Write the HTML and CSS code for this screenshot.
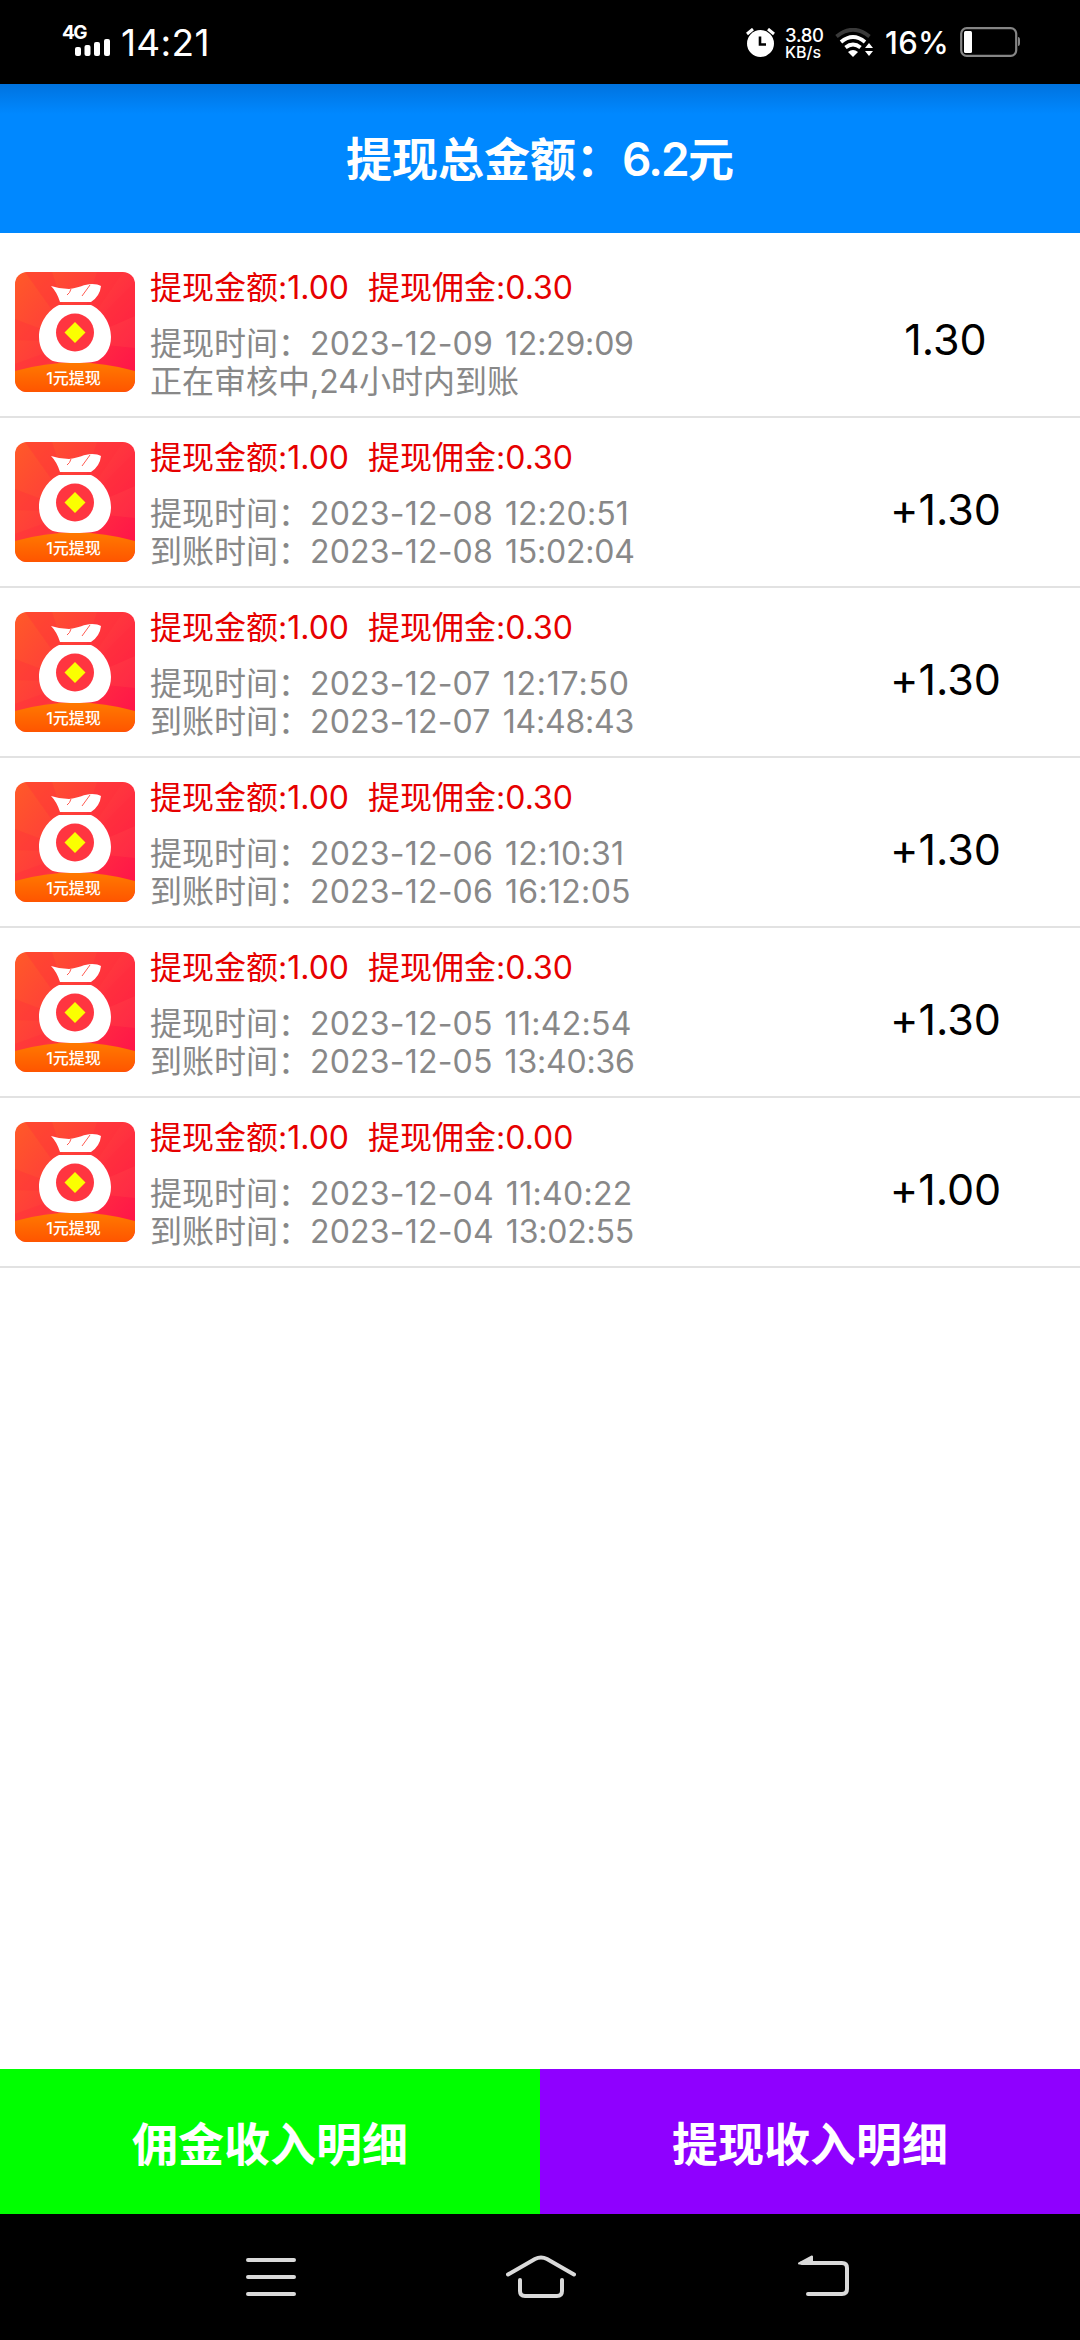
FILE: index.html
```html
<!DOCTYPE html>
<html lang="zh-CN">
<head>
<meta charset="utf-8">
<title>提现收入明细</title>
<link rel="stylesheet" href="styles.css">
</head>
<body>
<svg width="0" height="0" class="defs" aria-hidden="true">
  <defs>
    <linearGradient id="bg" x1="0" y1="0" x2="1" y2="0.8">
      <stop offset="0" stop-color="#ff5a28"/><stop offset="0.5" stop-color="#ff3a3c"/><stop offset="1" stop-color="#ff1648"/>
    </linearGradient>
    <linearGradient id="hill" x1="0" y1="0" x2="0" y2="1">
      <stop offset="0" stop-color="#ff7a00"/><stop offset="1" stop-color="#ff5500"/>
    </linearGradient>
    <clipPath id="tile"><rect width="120" height="120" rx="12"/></clipPath>
    <symbol id="bag" viewBox="0 0 120 120">
      <g clip-path="url(#tile)">
        <rect width="120" height="120" fill="url(#bg)"/>
        <path d="M60 70L10 0H37ZM60 70L82 0H108ZM60 70L120 10V44ZM60 70L0 47V68ZM60 70L0 92V100H20Z" fill="#ff2a3c" opacity=".3"/>
        <path d="M60 70L120 44V76Z" fill="#ff5a48" opacity=".2"/>
        <path d="M0 99Q60 82 120 99V120H0Z" fill="url(#hill)"/>
        <path d="M36 14Q45 17 54 17C64 16 69 12 77 12Q83 12 86 14Q85 24 76 30H45Q42 20 36 14Z" fill="#fff"/>
        <path d="M52 23Q55 21 56 17M67 24L75 13" fill="none" stroke="#ff5a50" stroke-width="1"/>
        <path d="M44 33H76C87 38 96 51 96 65C96 77 90 84 84 88Q80 91 60 91Q40 91 36 88C30 84 24 77 24 65C24 51 33 38 44 33Z" fill="#fff"/>
        <circle cx="60" cy="60.500" r="19" fill="#ff3540"/>
        <path d="M60 50L70.500 60.500L60 71L49.500 60.500Z" fill="#fbff00"/>
        <text x="58.500" y="112" text-anchor="middle" class="tile-text">1元提现</text>
      </g>
    </symbol>
  </defs>
</svg>

<header class="status">
  <span class="net">4G</span>
  <svg class="bars" width="36" height="17" viewBox="0 0 36 17" fill="#fff"><rect x="0" y="8" width="6" height="9" rx="2"/><rect x="9.500" y="6" width="6" height="11" rx="2"/><rect x="19" y="3" width="6" height="14" rx="2"/><rect x="29" y="0" width="6" height="17" rx="2"/></svg>
  <span class="clock">14:21</span>
  <svg class="alarm" width="30" height="30" viewBox="0 0 30 30"><circle cx="14.500" cy="15.500" r="13.500" fill="#fff"/><path d="M1 6L7 1M28 6L22 1" stroke="#fff" stroke-width="3"/><path d="M14 8.500V16.500H20" fill="none" stroke="#000" stroke-width="2.600"/></svg>
  <span class="speed"><span class="rate">3.80</span><span class="unit">KB/s</span></span>
  <svg class="wifi" width="40" height="30" viewBox="0 0 40 30"><g fill="none" stroke="#fff" stroke-width="3.800"><path d="M1.500 8.500Q18-5 34.500 8.500" stroke="#3a3a3a"/><path d="M6 14Q18 4 30 14"/><path d="M10.500 19.500Q18 13.500 25.500 19.500"/></g><path d="M13 24Q18 20 23 24L18 29Z" fill="#fff"/><path d="M30 20L34 15L38 20ZM30 23H38L34 28Z" fill="#fff"/></svg>
  <span class="pct">16%</span>
  <svg class="battery" width="60" height="30" viewBox="0 0 60 30"><rect x="1.200" y="1.200" width="55" height="27.600" rx="5.500" fill="none" stroke="#858585" stroke-width="2.200"/><rect x="4" y="4" width="8" height="22" rx="1.500" fill="#fff"/><path d="M58 10V19Q60 19 60 16V13Q60 10 58 10Z" fill="#858585"/></svg>
</header>

<section class="total"><h1>提现总金额：<span class="figure">6.2</span>元</h1></section>

<main class="list">
  <article class="row"><svg class="icon"><use href="#bag"/></svg><div class="info"><p class="sum"><span>提现金额:1.00</span><span>提现佣金:0.30</span></p><p>提现时间：<span class="date">2023-12-09</span> <span class="time tight">12:29:09</span></p><p>正在审核中,24小时内到账</p></div><div class="amount">1.30</div></article>
  <article class="row"><svg class="icon"><use href="#bag"/></svg><div class="info"><p class="sum"><span>提现金额:1.00</span><span>提现佣金:0.30</span></p><p>提现时间：<span class="date">2023-12-08</span> <span class="time">12:20:51</span></p><p>到账时间：<span class="date">2023-12-08</span> <span class="time tight">15:02:04</span></p></div><div class="amount">+1.30</div></article>
  <article class="row"><svg class="icon"><use href="#bag"/></svg><div class="info"><p class="sum"><span>提现金额:1.00</span><span>提现佣金:0.30</span></p><p>提现时间：<span class="date">2023-12-07</span> <span class="time wide">12:17:50</span></p><p>到账时间：<span class="date">2023-12-07</span> <span class="time tight">14:48:43</span></p></div><div class="amount">+1.30</div></article>
  <article class="row"><svg class="icon"><use href="#bag"/></svg><div class="info"><p class="sum"><span>提现金额:1.00</span><span>提现佣金:0.30</span></p><p>提现时间：<span class="date">2023-12-06</span> <span class="time loose">12:10:31</span></p><p>到账时间：<span class="date">2023-12-06</span> <span class="time loose">16:12:05</span></p></div><div class="amount">+1.30</div></article>
  <article class="row"><svg class="icon"><use href="#bag"/></svg><div class="info"><p class="sum"><span>提现金额:1.00</span><span>提现佣金:0.30</span></p><p>提现时间：<span class="date">2023-12-05</span> <span class="time loose">11:42:54</span></p><p>到账时间：<span class="date">2023-12-05</span> <span class="time tight">13:40:36</span></p></div><div class="amount">+1.30</div></article>
  <article class="row"><svg class="icon"><use href="#bag"/></svg><div class="info"><p class="sum"><span>提现金额:1.00</span><span>提现佣金:0.00</span></p><p>提现时间：<span class="date">2023-12-04</span> <span class="time loose">11:40:22</span></p><p>到账时间：<span class="date">2023-12-04</span> <span class="time tight">13:02:55</span></p></div><div class="amount">+1.00</div></article>
</main>

<div class="tabs"><button class="tab commission">佣金收入明细</button><button class="tab withdraw">提现收入明细</button></div>

<nav class="nav">
  <svg width="50" height="44" viewBox="0 0 50 44" stroke="#dadada" stroke-width="4" stroke-linecap="round"><path d="M2 5H48M2 22H48M2 39H48"/></svg>
  <svg width="70" height="44" viewBox="0 0 70 44" fill="none" stroke="#dadada" stroke-width="4" stroke-linecap="round"><path d="M2 19.500L29 4Q35 1 41 4L68 19.500M14 25V36Q14 41 19 41H51Q56 41 56 36V25"/></svg>
  <svg class="back" width="52" height="44" viewBox="0 0 52 44" fill="none" stroke="#dadada" stroke-width="4" stroke-linecap="round"><path d="M4 8H44Q49 8 49 13V34Q49 39 44 39H10"/><path d="M1 8.500L14 1.500V8.500Z" fill="#dadada" stroke-width="2" stroke-linejoin="round"/></svg>
</nav>
</body>
</html>
```

FILE: styles.css
```css
* { box-sizing: border-box; margin: 0; padding: 0; }
body { width: 1080px; height: 2340px; display: flex; flex-direction: column; overflow: hidden; background: #fff; font-family: Inter, "Noto Sans CJK SC", sans-serif; font-feature-settings: "calt" 0; }
svg { display: block; flex: none; }
.defs { position: absolute; }

.status { flex: none; height: 84px; background: #000; color: #fff; display: flex; align-items: flex-start; padding-left: 62px; line-height: 1; white-space: nowrap; }
.net { width: 13px; margin-top: 23px; font-size: 19px; font-weight: 700; letter-spacing: -1.5px; }
.bars { margin-top: 39px; }
.clock { width: 98px; margin: 24px 0 0 10px; font-size: 37px; letter-spacing: .3px; }
.alarm { margin: 28px 0 0 527px; }
.speed { width: 42px; margin: 25px 0 0 9px; display: flex; flex-direction: column; font-weight: 500; }
.rate { font-size: 18.500px; line-height: 20px; letter-spacing: -.3px; }
.unit { font-size: 16px; line-height: 14px; }
.wifi { margin: 28px 0 0 8px; }
.pct { width: 65px; margin: 27px 0 0 10px; font-size: 31px; font-weight: 500; letter-spacing: .3px; }
.battery { margin: 27px 0 0 10px; }

.total { flex: none; height: 149px; display: flex; align-items: center; justify-content: center; background: linear-gradient(#0073df, #0088ff 30px); color: #fff; }
.total h1 { font-size: 46px; font-weight: 700; line-height: 60px; }
.figure { font-weight: 600; letter-spacing: -1.8px; }

.list { flex: 1; padding-top: 15px; }
.row { height: 170px; display: grid; grid-template-columns: 120px 1fr 270px; column-gap: 15px; padding-left: 15px; border-bottom: 2px solid #e2e2e2; }
.icon { width: 120px; height: 120px; margin-top: 24px; }
.tile-text { font-size: 16px; font-weight: 500; fill: #fff; }
.info { padding-top: 21px; font-size: 32px; line-height: 38px; color: #888; white-space: nowrap; }
.info .sum { display: flex; gap: 19px; margin-bottom: 18px; color: #e60000; }
.date { letter-spacing: .2px; }
.time { margin-left: 3px; letter-spacing: .1px; }
.time.tight { letter-spacing: -.2px; }
.time.loose { letter-spacing: .3px; }
.time.wide { letter-spacing: .8px; }
.amount { display: flex; justify-content: center; padding: 66px 0 0 1px; font-size: 43px; line-height: 50px; color: #000; }

.tabs { flex: none; height: 145px; display: grid; grid-template-columns: 1fr 1fr; }
.tab { border: 0; color: #fff; font: 700 46px/60px Inter, "Noto Sans CJK SC", sans-serif; padding-top: 5px; }
.commission { background: #00ff00; }
.withdraw { background: #8f00ff; }

.nav { flex: none; height: 126px; background: #000; display: flex; padding: 41px 0 0 246px; }
.nav svg + svg { margin-left: 210px; }
.nav .back { margin-left: 222px; }
```
